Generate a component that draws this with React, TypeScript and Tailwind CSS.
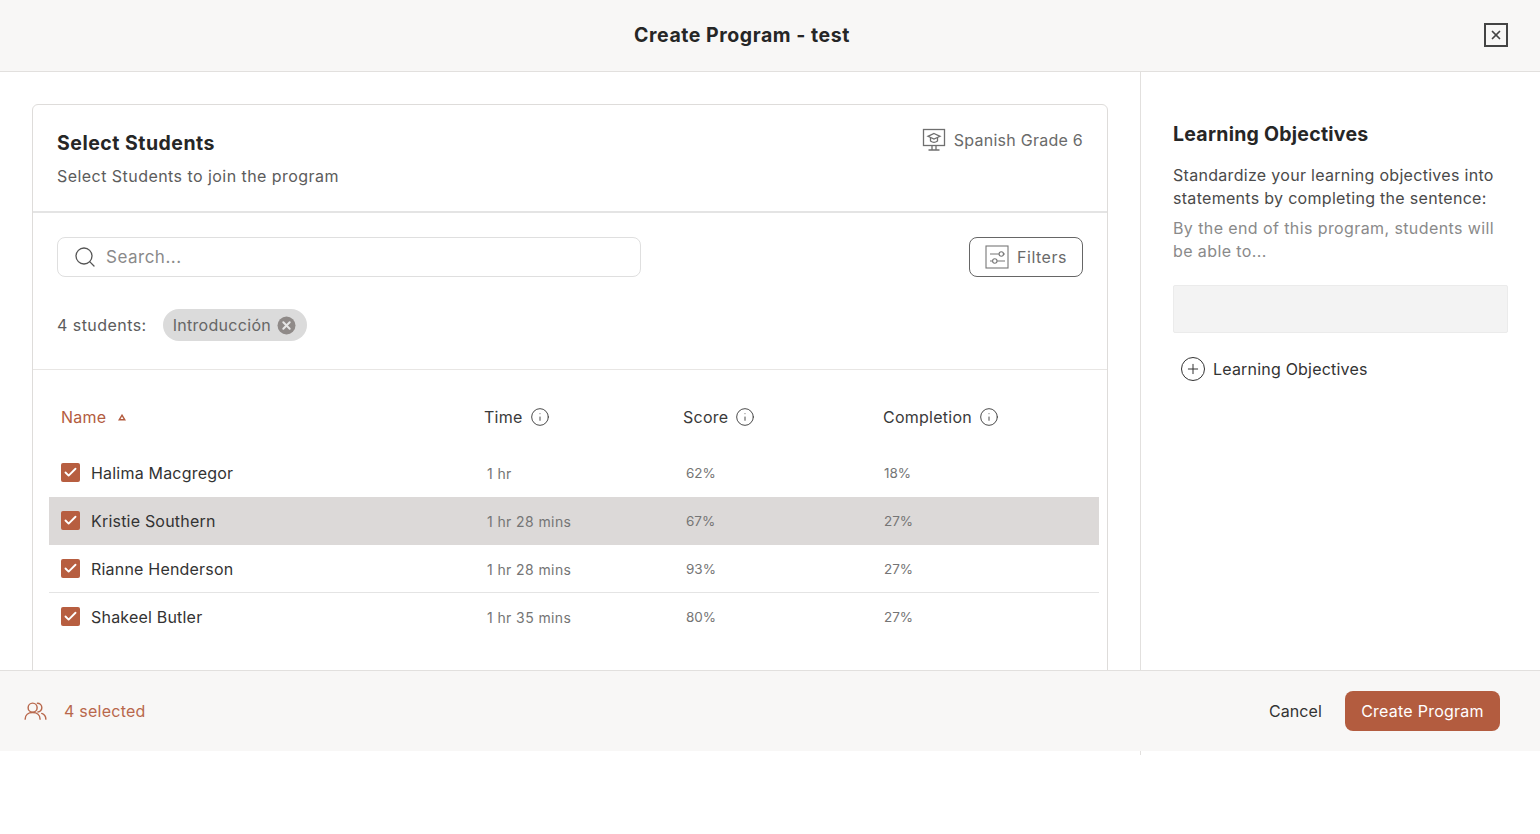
import { Search, X, Info, Plus, Check } from "lucide-react";

const students = [
  { name: "Halima Macgregor", time: "1 hr", score: "62%", completion: "18%" },
  { name: "Kristie Southern", time: "1 hr 28 mins", score: "67%", completion: "27%", active: true },
  { name: "Rianne Henderson", time: "1 hr 28 mins", score: "93%", completion: "27%" },
  { name: "Shakeel Butler", time: "1 hr 35 mins", score: "80%", completion: "27%" },
];

function ColumnHead({ label }: { label: string }) {
  return (
    <div className="flex items-center gap-[7px] text-[#3a3a3a]">
      <span>{label}</span>
      <Info size={20} strokeWidth={1.1} />
    </div>
  );
}

export default function App() {
  return (
    <div className="h-[834px] overflow-hidden bg-white font-['Inter',sans-serif] text-[16px] font-[420] tracking-[0.25px] text-[#2f2f2f]">
      <header className="relative flex h-[72px] items-center justify-center border-b border-[#e2e0de] bg-[#f8f7f6] pr-14">
        <h1 className="text-[19.5px] font-bold tracking-[0.55px] text-[#262626]">Create Program - test</h1>
        <button className="absolute top-[23px] right-[32px] flex h-6 w-6 items-center justify-center border-2 border-[#444]">
          <X size={14} strokeWidth={3} className="text-[#444]" />
        </button>
      </header>

      <div className="relative flex h-[683px]">
        <main className="w-[1141px] shrink-0 overflow-hidden border-r border-[#e2e0de] pt-8 pl-8 pr-8">
          <section className="w-[1076px] rounded-t-md border border-[#dedcda]">
            <div className="flex h-[108px] justify-between border-b-2 border-[#e4e4e4] px-6 pt-6">
              <div>
                <h2 className="text-[19.5px] leading-7 font-bold tracking-[0.5px] text-[#262626]">Select Students</h2>
                <p className="mt-[7px] leading-6 tracking-[0.45px] text-[#5c5c5c]">Select Students to join the program</p>
              </div>
              <div className="-mt-px flex h-6 items-center gap-2 text-[#6a6a6a]">
                <svg width="24" height="24" viewBox="0 0 24 24" fill="none" stroke="#6f6f6f" strokeWidth="1.3">
                  <rect x="1.5" y="1.5" width="21" height="16" />
                  <path d="M12 5.5L18 8.3L12 11L6 8.3L12 5.5Z" />
                  <path d="M8.5 10V13C10.5 14.5 13.5 14.5 15.5 13V10" />
                  <path d="M10 17.5V21.5M14 17.5V21.5M6.5 22H17.5" />
                </svg>
                <span>Spanish Grade 6</span>
              </div>
            </div>

            <div className="h-[157px] border-b border-[#e8e6e4] px-6 pt-6">
              <div className="flex items-center justify-between">
                <div className="flex h-10 w-[584px] items-center gap-[9px] rounded-lg border border-[#dfdfdf] pl-[15px] text-[17px] tracking-[0.5px] text-[#8a8a8a]">
                  <Search size={24} strokeWidth={1.3} className="text-[#555]" />
                  <span className="pt-[2px]">Search...</span>
                </div>
                <button className="flex h-10 w-[114px] items-center justify-center gap-2 rounded-lg border border-[#666] tracking-[0.5px] text-[#6a6a6a]">
                  <svg width="24" height="24" viewBox="0 0 24 24" fill="none" stroke="#777" strokeWidth="1.1">
                    <rect x="1" y="1" width="22" height="22" />
                    <path d="M5 9H14M18.5 9H20M5 16H7.5M12 16H20" />
                    <circle cx="16.3" cy="9" r="2.2" />
                    <circle cx="9.8" cy="16" r="2.2" />
                  </svg>
                  <span>Filters</span>
                </button>
              </div>
              <div className="mt-8 flex items-center gap-4 tracking-[0.45px] text-[#5c5c5c]">
                <span>4 students:</span>
                <span className="flex h-8 items-center gap-[6px] rounded-full bg-[#dbdbdb] pr-[11px] pl-[10px] tracking-[0.3px] text-[#666]">
                  <span>Introducción</span>
                  <svg width="19" height="19" viewBox="0 0 19 19">
                    <circle cx="9.5" cy="9.5" r="9" fill="#8f8a88" />
                    <path d="M6.3 6.3L12.7 12.7M12.7 6.3L6.3 12.7" stroke="#e6e6e6" strokeWidth="2" strokeLinecap="round" />
                  </svg>
                </span>
              </div>
            </div>

            <div className="pt-[35px] pr-2 pb-8 pl-4">
              <div className="grid h-5 grid-cols-[435px_199px_200px_1fr] items-center">
                <div className="flex items-center gap-3 pl-3 text-[#b35c3f]">
                  <span>Name</span>
                  <svg width="8" height="7" viewBox="0 0 8 7" fill="none" stroke="#b35c3f" strokeWidth="1.4">
                    <path d="M4 1.2L6.8 5.8H1.2L4 1.2Z" />
                  </svg>
                </div>
                <ColumnHead label="Time" />
                <ColumnHead label="Score" />
                <ColumnHead label="Completion" />
              </div>
              <div className="mt-6">
                {students.map((s, i) => (
                  <div
                    key={s.name}
                    className={`grid h-12 grid-cols-[438px_199px_198px_1fr] items-center text-[13.5px] font-normal tracking-normal text-[#757575] ${
                      s.active ? "bg-[#dcd9d8]" : ""
                    } ${i === 2 ? "shadow-[inset_0_-1px_0_#e4e4e4]" : ""}`}
                  >
                    <div className="flex items-center gap-[11px] pb-px pl-3 text-[16px] font-[420] tracking-[0.2px] text-[#333]">
                      <span className="flex h-[19px] w-[19px] items-center justify-center rounded-[2px] bg-[#b75e40]">
                        <Check size={15} strokeWidth={3} className="text-white" />
                      </span>
                      {s.name}
                    </div>
                    <div className="text-[14px] tracking-[0.4px]">{s.time}</div>
                    <div>{s.score}</div>
                    <div>{s.completion}</div>
                  </div>
                ))}
              </div>
            </div>
          </section>
        </main>

        <aside className="flex-1 pt-[48px] pr-8 pl-8">
          <h2 className="text-[19.5px] leading-7 font-bold tracking-[0.25px] text-[#262626]">Learning Objectives</h2>
          <p className="mt-4 leading-[23px] tracking-[0.3px] text-[#4a4a4a]">
            Standardize your learning objectives into statements by completing the sentence:
          </p>
          <p className="mt-[7px] leading-[23px] tracking-[0.4px] text-[#8a8a8a]">
            By the end of this program, students will be able to...
          </p>
          <div className="mt-[22px] h-[48px] rounded-[2px] border border-[#ebebeb] bg-[#f3f3f3]" />
          <button className="mt-6 flex items-center gap-2 pl-2 tracking-[0.2px] text-[#333]">
            <span className="flex h-6 w-6 items-center justify-center rounded-full border-[1.5px] border-[#333]">
              <Plus size={16} strokeWidth={1.5} />
            </span>
            Learning Objectives
          </button>
        </aside>

        <footer className="absolute top-[598px] right-0 left-0 flex h-[81px] items-center justify-between border-t border-[#e2e0de] bg-[#f8f7f6] pr-10 pl-6">
          <div className="flex items-center gap-[17px] text-[#b8684c]">
            <svg width="23" height="20" viewBox="0 0 24 20" fill="none" stroke="#b8684c" strokeWidth="1.5" strokeLinecap="round">
              <circle cx="9" cy="6.5" r="4.7" />
              <path d="M1.2 18.5C1.2 14 4.5 11.5 9 11.5C13.5 11.5 16.8 14 16.8 18.5" />
              <path d="M14 2C16.5 2 18.6 4 18.6 6.5C18.6 9 16.5 11 14.5 11" />
              <path d="M18.5 12.5C21 13.5 22.8 15.5 22.8 18.5" />
            </svg>
            <span>4 selected</span>
          </div>
          <div className="flex items-center gap-[23px]">
            <button className="tracking-[0.1px] text-[#333]">Cancel</button>
            <button className="h-10 w-[155px] rounded-lg bg-[#b35c3f] text-white">Create Program</button>
          </div>
        </footer>
      </div>
    </div>
  );
}
